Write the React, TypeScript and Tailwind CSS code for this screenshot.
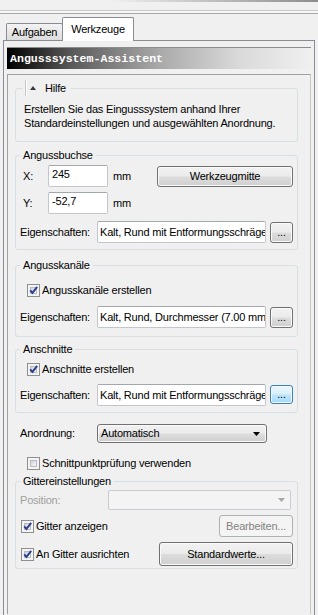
import React from "react";

type P = { children?: React.ReactNode; className?: string };

function Btn({ children, className = "" }: P) {
  return (
    <div
      className={`flex items-center justify-center rounded-[3px] border border-[#707070] bg-[linear-gradient(#f2f2f2_0%,#ebebeb_48%,#dddddd_52%,#cfcfcf_100%)] shadow-[inset_0_0_0_1px_#fbfbfb] ${className}`}
    >
      {children}
    </div>
  );
}

function BlueBtn({ children, className = "" }: P) {
  return (
    <div
      className={`flex items-center justify-center rounded-[3px] border border-[#3c7fb1] bg-[linear-gradient(#eaf6fd_0%,#d9f0fc_48%,#bee6fd_52%,#a7d9f5_100%)] shadow-[inset_0_0_0_1px_#f4fbff] ${className}`}
    >
      {children}
    </div>
  );
}

function DisBtn({ children, className = "" }: P) {
  return (
    <div
      className={`flex items-center justify-center rounded-[3px] border border-[#adb2b5] bg-[#f4f4f4] text-[#838383] ${className}`}
    >
      {children}
    </div>
  );
}

function Input({ children, className = "" }: P) {
  return (
    <div
      className={`h-[22px] rounded-[2px] border border-[#c3c6cc] border-t-[#a3a7ae] bg-white pl-[3px] pt-[2px] ${className}`}
    >
      {children}
    </div>
  );
}

function Field({ children, className = "" }: P) {
  return (
    <div
      className={`flex h-[22px] items-center overflow-hidden whitespace-nowrap rounded-[2px] border border-[#c3c6cc] border-t-[#a3a7ae] bg-white pl-[2px] ${className}`}
    >
      {children}
    </div>
  );
}

function Check({ checked }: { checked: boolean }) {
  return (
    <div className="relative h-[13px] w-[13px] shrink-0 border border-[#8e8f8f] bg-[#f4f4f4] p-[2px]">
      <div className="h-full w-full border border-[#b9bdc3] bg-[linear-gradient(135deg,#cfd2d7,#f7f7f7)]" />
      {checked && (
        <svg className="absolute left-0 top-0" width="11" height="11" viewBox="0 0 11 11">
          <path d="M2.2 5.4 L4.4 7.9 L9.2 1.8" fill="none" stroke="#2b3f8e" strokeWidth="1.9" />
        </svg>
      )}
    </div>
  );
}

function Group({ title, className = "", children }: { title: React.ReactNode; className?: string; children: React.ReactNode }) {
  return (
    <fieldset className={`ml-[7px] w-[283px] min-w-0 rounded-[3px] border border-[#d5dfe5] ${className}`}>
      <legend className="ml-[4px] px-[3px] leading-[13px]">{title}</legend>
      {children}
    </fieldset>
  );
}

export default function App() {
  return (
    <div className="h-[615px] w-[318px] overflow-hidden bg-[#f0f0f0] font-['Liberation_Sans',Arial,sans-serif] text-[11px] leading-[13px] tracking-[-0.2px] text-black">
      {/* top rules */}
      <div className="h-[2px] bg-[linear-gradient(to_right,#f0f0f0_35%,#8c8c8c)]" />
      <div className="mt-[8px] h-px bg-[#c8c8c8]" />
      <div className="h-[2px] bg-[#f8f8f8]" />
      <div className="h-px bg-[#a7a7a7]" />

      {/* tabs */}
      <div className="flex h-[26px] items-end pl-[6px]">
        <div className="flex h-[17px] w-[57px] items-center justify-center rounded-t-[2px] border border-b-0 border-[#898c95] bg-[linear-gradient(#f3f3f3,#dcdcdc)]">
          Aufgaben
        </div>
        <div className="relative z-10 -mb-px -ml-px flex h-[24px] w-[72px] items-center justify-center rounded-t-[2px] border border-b-0 border-[#898c95] bg-white pb-[1px]">
          Werkzeuge
        </div>
      </div>

      {/* tab panel */}
      <div className="ml-[3px] h-[580px] w-[312px] border-x border-t border-[#898c95] bg-[#f0f0f0] px-[3px] pt-[6px]">
        <div className="flex h-[22px] items-center border-t border-[#8c8c8c] bg-[linear-gradient(to_right,#000000_0%,#5c5c5c_22%,#a9a9a9_50%,#d9d9d9_76%,#f0f0f0_100%)] pl-[3px] font-['Liberation_Mono',monospace] text-[11.6px] font-bold tracking-normal text-white">
          Angusssystem-Assistent
        </div>

        <div className="mt-[5px] h-[540px] border-x border-t border-[#a0a0a0] border-r-[#c8c8c8]">
          {/* Hilfe */}
          <fieldset className="ml-[7px] mt-[5px] w-[283px] min-w-0 rounded-[3px] border border-[#d5dfe5]">
            <legend className="ml-[7px] pr-[5px] pl-[2px]">
              <span className="flex h-[16px] items-center">
                <span className="h-[16px] w-px bg-[#c8c8c8]" />
                <span className="h-[16px] w-px bg-white" />
                <svg className="ml-[3px]" width="6" height="4" viewBox="0 0 6 4">
                  <path d="M0 4 L3 0 L6 4 Z" fill="#3a3a3a" />
                </svg>
                <span className="ml-[9px]">Hilfe</span>
              </span>
            </legend>
            <div className="pb-[11px] pl-[8px] pt-[6px] leading-[14px]">
              Erstellen Sie das Eingusssystem anhand Ihrer
              <br />
              Standardeinstellungen und ausgewählten Anordnung.
            </div>
          </fieldset>

          {/* Angussbuchse */}
          <Group title="Angussbuchse" className="mt-[7px]">
            <div className="pb-[6px] pl-[4px] pt-[3px]">
              <div className="flex h-[22px] items-center pl-[3px]">
                <span className="w-[25px]">X:</span>
                <Input className="w-[60px]">245</Input>
                <span className="ml-[5px] w-[44px]">mm</span>
                <Btn className="mt-[1px] h-[21px] w-[136px] self-start">Werkzeugmitte</Btn>
              </div>
              <div className="mt-[5px] flex h-[22px] items-center pl-[3px]">
                <span className="w-[25px]">Y:</span>
                <Input className="w-[60px]">-52,7</Input>
                <span className="ml-[5px]">mm</span>
              </div>
              <div className="mt-[7px] flex h-[22px] items-center">
                <span className="w-[77px]">Eigenschaften:</span>
                <Field className="w-[169px]">Kalt, Rund mit Entformungsschräge</Field>
                <Btn className="ml-[4px] h-[21px] w-[23px]">...</Btn>
              </div>
            </div>
          </Group>

          {/* Angusskanäle */}
          <Group title="Angusskanäle" className="mt-[9px]">
            <div className="pb-[8px] pl-[4px] pt-[11px]">
              <div className="flex h-[15px] items-center pl-[7px]">
                <Check checked />
                <span className="ml-[2px]">Angusskanäle erstellen</span>
              </div>
              <div className="mt-[8px] flex h-[22px] items-center">
                <span className="w-[77px]">Eigenschaften:</span>
                <Field className="w-[169px]">Kalt, Rund, Durchmesser (7.00 mm</Field>
                <Btn className="ml-[4px] h-[21px] w-[23px]">...</Btn>
              </div>
            </div>
          </Group>

          {/* Anschnitte */}
          <Group title="Anschnitte" className="mt-[6px]">
            <div className="pb-[6px] pl-[4px] pt-[6px]">
              <div className="flex h-[15px] items-center pl-[7px]">
                <Check checked />
                <span className="ml-[2px]">Anschnitte erstellen</span>
              </div>
              <div className="mt-[7px] flex h-[22px] items-center">
                <span className="w-[77px]">Eigenschaften:</span>
                <Field className="w-[169px]">Kalt, Rund mit Entformungsschräge</Field>
                <BlueBtn className="ml-[4px] h-[19px] w-[23px] self-start mt-[1px]">...</BlueBtn>
              </div>
            </div>
          </Group>

          {/* Anordnung */}
          <div className="mt-[11px] flex h-[19px] items-center pl-[12px]">
            <span className="w-[77px]">Anordnung:</span>
            <Btn className="h-[19px] w-[170px] !justify-between pl-[3px] pr-[6px]">
              <span>Automatisch</span>
              <svg width="7" height="4" viewBox="0 0 7 4">
                <path d="M0 0 L7 0 L3.5 4 Z" fill="#000" />
              </svg>
            </Btn>
          </div>

          {/* Schnittpunkt */}
          <div className="mt-[13px] flex h-[15px] items-center pl-[19px]">
            <Check checked={false} />
            <span className="ml-[2px]">Schnittpunktprüfung verwenden</span>
          </div>

          {/* Gittereinstellungen */}
          <Group title="Gittereinstellungen" className="mt-[4px]">
            <div className="pb-[2px] pt-[2px]">
              <div className="flex h-[20px] items-center pl-[4px]">
                <span className="w-[88px] text-[#a0a0a0]">Position:</span>
                <div className="flex h-[20px] w-[183px] items-center justify-end rounded-[2px] border border-[#c9cdd1] bg-[#f4f4f4] pr-[5px]">
                  <svg width="7" height="4" viewBox="0 0 7 4">
                    <path d="M0 0 L7 0 L3.5 4 Z" fill="#a7a7a7" />
                  </svg>
                </div>
              </div>
              <div className="mt-[5px] flex h-[22px] items-start justify-between pl-[5px] pr-[4px]">
                <div className="mt-[4px] flex h-[15px] items-center">
                  <Check checked />
                  <span className="ml-[2px]">Gitter anzeigen</span>
                </div>
                <DisBtn className="h-[22px] w-[74px]">Bearbeiten...</DisBtn>
              </div>
              <div className="mt-[5px] flex h-[24px] items-center justify-between pl-[5px] pr-[4px]">
                <div className="flex h-[15px] items-center">
                  <Check checked />
                  <span className="ml-[2px]">An Gitter ausrichten</span>
                </div>
                <Btn className="h-[24px] w-[134px]">Standardwerte...</Btn>
              </div>
            </div>
          </Group>
        </div>
      </div>
    </div>
  );
}
